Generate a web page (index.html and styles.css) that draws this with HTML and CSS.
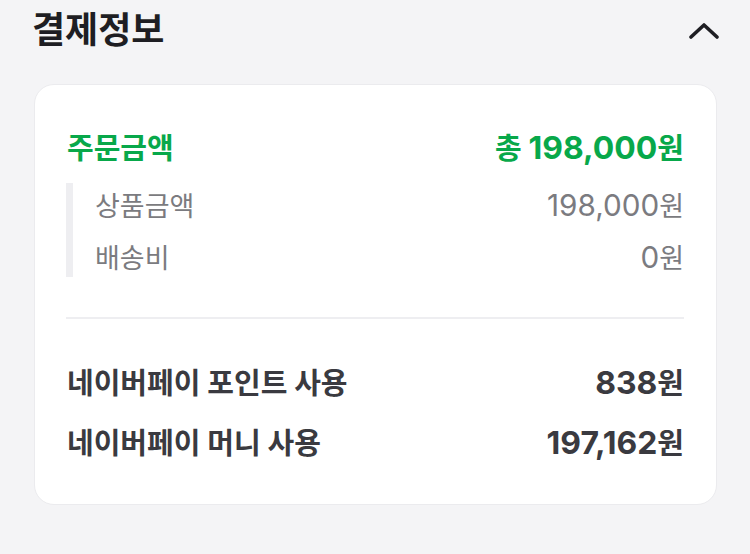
FILE: index.html
```html
<!DOCTYPE html>
<html lang="ko">
<head>
<meta charset="utf-8">
<link rel="stylesheet" href="styles.css">
</head>
<body>
<div class="page">
  <div class="header">
    <h1 class="title">결제정보</h1>
    <svg class="chevron" width="30" height="18" viewBox="0 0 30 18"><polyline points="2,15 15,3 28,15" fill="none" stroke="#1e1e23" stroke-width="3.6" stroke-linecap="round" stroke-linejoin="round"/></svg>
  </div>
  <div class="card">
    <div class="row main">
      <span>주문금액</span>
      <span>총 <span class="num">198,000</span>원</span>
    </div>
    <div class="sub">
      <div class="row subrow"><span>상품금액</span><span><span class="num">198,000</span>원</span></div>
      <div class="row subrow"><span>배송비</span><span><span class="num">0</span>원</span></div>
    </div>
    <div class="divider"></div>
    <div class="pay">
      <div class="row payrow"><span>네이버페이 포인트 사용</span><span><span class="num">838</span>원</span></div>
      <div class="row payrow"><span>네이버페이 머니 사용</span><span><span class="num">197,162</span>원</span></div>
    </div>
  </div>
</div>
</body>
</html>
```
FILE: styles.css
```css
* { box-sizing: border-box; }
html, body { margin: 0; padding: 0; }
body {
  background: #f4f4f6;
  font-family: Inter, "Noto Sans CJK KR", sans-serif;
  width: 750px;
  height: 554px;
  overflow: hidden;
}
.page { padding: 0 33px 0 34px; }
.header {
  height: 60px;
  display: flex;
  align-items: center;
  justify-content: space-between;
}
.title {
  margin: 0 0 0 -2px;
  font-size: 36px;
  font-weight: 700;
  color: #1e1e23;
  line-height: 40px;
}
.chevron { margin-right: -2px; margin-top: 2px; }
.card {
  margin-top: 24px;
  background: #fff;
  border: 1px solid #ebebee;
  border-radius: 20px;
  padding: 45px 32px 47px 32px;
}
.row {
  display: flex;
  justify-content: space-between;
  align-items: center;
  white-space: nowrap;
}
.num { font-size: 1.1em; line-height: 1; }
.main {
  height: 32px;
  font-size: 29px;
  font-weight: 700;
  color: #08a84a;
}
.sub {
  margin-top: 21px;
  border-left: 7px solid #eeeef1;
  margin-left: -1px;
  padding-left: 22px;
  display: flex;
  flex-direction: column;
  gap: 10px;
}
.subrow {
  height: 42px;
  font-size: 27px;
  color: #7b7b80;
}
.divider {
  height: 2px;
  background: #eeeef1;
  margin-top: 40px;
  margin-left: -1px;
}
.pay {
  margin-top: 46px;
  display: flex;
  flex-direction: column;
  gap: 28px;
}
.payrow {
  height: 32px;
  font-size: 29px;
  font-weight: 700;
  color: #3a3a40;
}
```
